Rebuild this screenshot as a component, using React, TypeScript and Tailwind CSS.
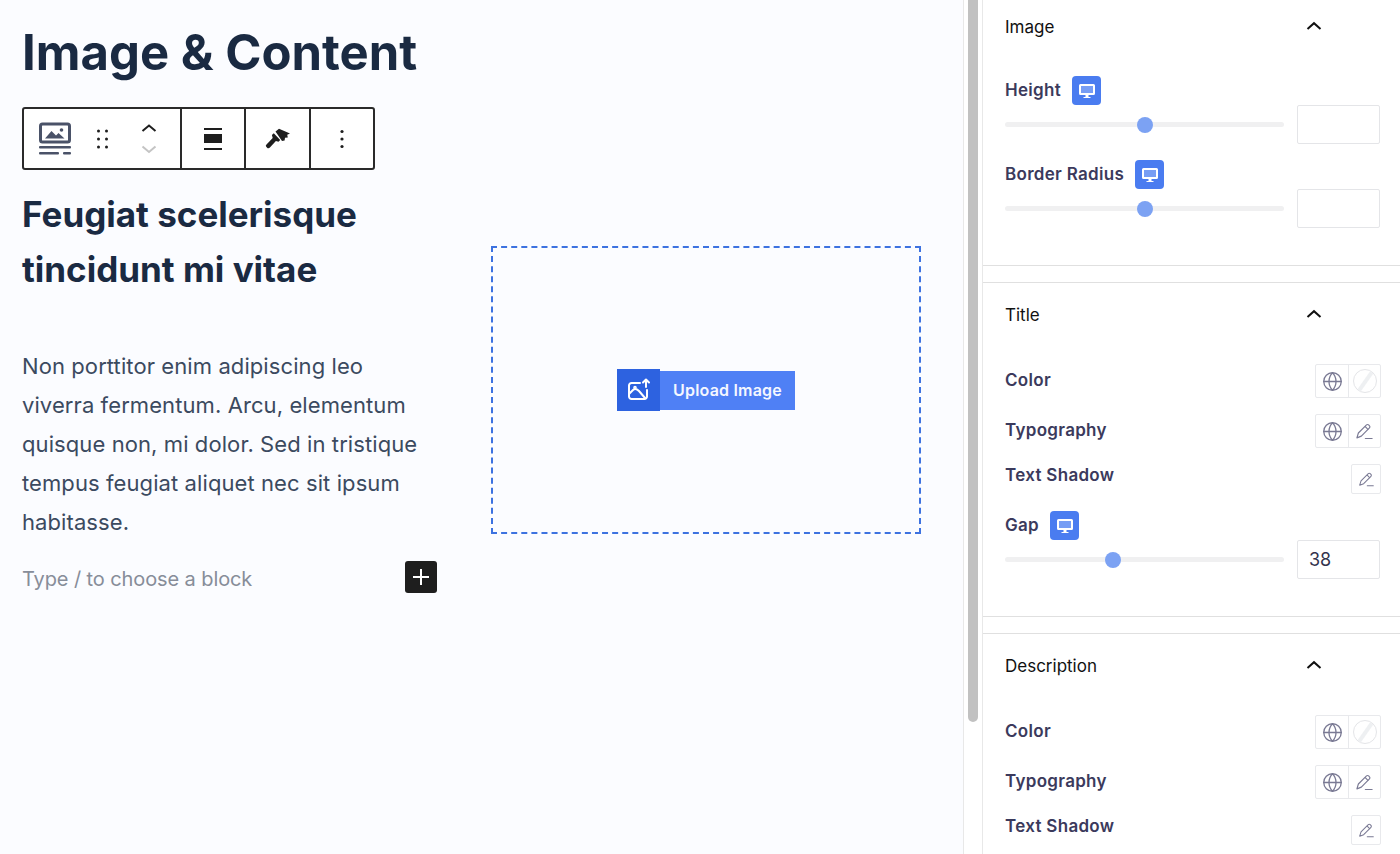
import { Globe } from 'lucide-react';

function Desktop() {
  return (
    <span className="flex h-[29px] w-[29px] items-center justify-center rounded-[4px] bg-[#4a7cf0]">
      <svg width="18" height="18" viewBox="0 0 18 18">
        <rect x="3" y="4" width="12" height="7" fill="#fff" opacity="0.25" />
        <path d="M2.500 2h13A1.500 1.500 0 0 1 17 3.500v8a1.500 1.500 0 0 1-1.500 1.500h-13A1.500 1.500 0 0 1 1 11.500v-8A1.500 1.500 0 0 1 2.500 2zM3 4v7h12V4z" fill="#fff" fillRule="evenodd" />
        <path d="M7.500 13h3v2h2v1h-7v-1h2z" fill="#fff" />
      </svg>
    </span>
  );
}

function Pencil({ size = 19 }: { size?: number }) {
  return (
    <svg width={size} height={size} viewBox="0 0 18 18" fill="none" stroke="#7a7a94" strokeWidth="1.100">
      <path d="M1.800 15 3.200 10.400 10.900 2.800a1.400 1.400 0 0 1 2 0l.8.8a1.400 1.400 0 0 1 0 2L6 13.400z" strokeLinejoin="round" />
      <path d="M9.500 4.200l3 3" />
      <path d="M9.800 15.600h6.400" strokeLinecap="round" />
    </svg>
  );
}

function NoColor() {
  return (
    <span className="relative block h-[24px] w-[24px] overflow-hidden rounded-full border border-[#e4e5e8] bg-white">
      <span className="absolute left-[9px] top-[-3px] h-[30px] w-[4px] rotate-[35deg] bg-[#eef0f2] blur-[0.5px]" />
    </span>
  );
}

function Chevron() {
  return (
    <svg width="16" height="10" viewBox="0 0 16 10" fill="none" stroke="#111" strokeWidth="2">
      <path d="M1.500 8 8 2.200 14.500 8" />
    </svg>
  );
}

function Slider({ label, value, thumb, className }: { label: string; value?: string; thumb: number; className?: string }) {
  return (
    <div className={className}>
      <div className="flex h-[29px] items-center gap-[11px]">
        <span className="text-[17px] font-semibold tracking-[0.3px] text-[#3b3a5c]">{label}</span>
        <Desktop />
      </div>
      <div className="flex h-[39px] items-center">
        <div className="relative h-[5px] w-[279px] rounded-full bg-[#f0f0f1]">
          <span className="absolute top-[-5.500px] h-4 w-4 rounded-full bg-[#7ca2f3]" style={{ left: thumb }} />
        </div>
        <div className="ml-[13px] flex h-[39px] w-[83px] items-center rounded-[2px] border border-[#e4e5e8] bg-white pl-[11px] text-[18px] text-[#33334d]">
          {value}
        </div>
      </div>
    </div>
  );
}

function ButtonRow({ label, kind }: { label: string; kind: 'color' | 'type' }) {
  return (
    <div className="flex h-[34px] items-center justify-between">
      <span className="text-[17px] font-semibold tracking-[0.3px] text-[#3b3a5c]">{label}</span>
      <div className="flex h-[34px] w-[66px] rounded-[2px] border border-[#e8e9ec] bg-white">
        <span className="flex w-[33px] items-center justify-center border-r border-[#e8e9ec]">
          <Globe size={21} color="#7a7a94" strokeWidth={1.500} />
        </span>
        <span className="flex flex-1 items-center justify-center">
          {kind === 'color' ? <NoColor /> : <Pencil />}
        </span>
      </div>
    </div>
  );
}

function ShadowRow() {
  return (
    <div className="flex h-[30px] items-center justify-between">
      <span className="mb-[6px] text-[17px] font-semibold tracking-[0.3px] text-[#3b3a5c]">Text Shadow</span>
      <span className="flex h-[30px] w-[30px] items-center justify-center rounded-[2px] border border-[#e8e9ec] bg-white">
        <Pencil size={17} />
      </span>
    </div>
  );
}

function Header({ title, first }: { title: string; first?: boolean }) {
  return (
    <div className={`flex items-center justify-between pr-[59px] ${first ? 'h-[56px]' : 'h-[66px]'}`}>
      <span className="text-[17px] text-[#111]">{title}</span>
      <span className="mb-[5px]">
        <Chevron />
      </span>
    </div>
  );
}

function Toolbar() {
  return (
    <div className="flex h-[63px] w-[353px] rounded-[3px] border-2 border-[#2a2a2a] bg-white">
      <div className="flex w-[158px] items-center border-r-2 border-[#2a2a2a]">
        <svg className="ml-[14px]" width="34" height="34" viewBox="0 0 34 34">
          <rect x="2.500" y="2" width="29" height="18" rx="2" fill="none" stroke="#4a5268" strokeWidth="3" />
          <path d="M7 16.500 13.500 9l4.500 4.500 2.500-2.500 6 5.500z" fill="#4a5268" />
          <circle cx="23.500" cy="8" r="1.800" fill="#4a5268" />
          <rect x="1" y="24" width="32" height="2.500" rx="1" fill="#4a5268" />
          <rect x="1" y="30" width="20" height="2.500" rx="1" fill="#4a5268" />
          <rect x="25" y="30" width="8" height="2.500" rx="1" fill="#4a5268" />
        </svg>
        <svg className="ml-[24px]" width="14" height="20" viewBox="0 0 14 20" fill="#1e1e1e">
          <circle cx="2.500" cy="2" r="1.500" />
          <circle cx="10.500" cy="2" r="1.500" />
          <circle cx="2.500" cy="10" r="1.500" />
          <circle cx="10.500" cy="10" r="1.500" />
          <circle cx="2.500" cy="18" r="1.500" />
          <circle cx="10.500" cy="18" r="1.500" />
        </svg>
        <svg className="ml-[31px] mt-[2px]" width="16" height="34" viewBox="0 0 16 34" fill="none" strokeWidth="2">
          <path d="M1.500 8 8 2.500 14.500 8" stroke="#1e1e1e" />
          <path d="M1.500 23.500 8 29 14.500 23.500" stroke="#c4c4c4" />
        </svg>
      </div>
      <div className="flex w-[64px] items-center justify-center border-r-2 border-[#2a2a2a]">
        <svg width="20" height="22" viewBox="0 0 20 22" fill="#1e1e1e">
          <rect x="1" y="0" width="18" height="2" />
          <rect x="1" y="6" width="18" height="9" />
          <rect x="1" y="20" width="18" height="2" />
        </svg>
      </div>
      <div className="flex w-[65px] items-center justify-center border-r-2 border-[#2a2a2a]">
        <svg width="26" height="22" viewBox="0 0 26 22" fill="#1e1e1e">
          <path d="M10.500 3.500 14 .8l11 4.700-2.800 1.300.6 2.800-2.800.2-.4 2.800-2.600.3z" />
          <path d="M8.800 5.200 15.200 12l-1.700 1.700-2.600-.8-6 6.600a2 2 0 0 1-3-.1 2 2 0 0 1-.4-3l6.200-6.300-.8-3.200z" />
        </svg>
      </div>
      <div className="flex flex-1 items-center justify-center">
        <svg width="4" height="20" viewBox="0 0 4 20" fill="#1e1e1e">
          <circle cx="2" cy="2.500" r="1.600" />
          <circle cx="2" cy="10" r="1.600" />
          <circle cx="2" cy="17.500" r="1.600" />
        </svg>
      </div>
    </div>
  );
}

export default function App() {
  return (
    <div className="flex h-[854px] w-[1400px] overflow-hidden bg-white font-['Inter',sans-serif]">
      {/* Canvas */}
      <div className="h-full w-[963px] shrink-0 bg-[#fbfcff] pl-[22px] pr-[42px]">
        <h1 className="mt-[24px] text-[49px] font-bold leading-[58px] text-[#1a2a42]">Image &amp; Content</h1>
        <div className="mt-[25px]">
          <Toolbar />
        </div>
        <div className="flex justify-between">
          <div className="w-[415px]">
            <h2 className="mt-[17px] text-[35px] font-bold leading-[55px] text-[#1a2a42]">
              Feugiat scelerisque tincidunt mi vitae
            </h2>
            <p className="mt-[50px] text-[22px] leading-[39px] tracking-[0.09px] text-[#3b4a60]">
              Non porttitor enim adipiscing leo viverra fermentum. Arcu, elementum quisque non, mi dolor. Sed in tristique tempus feugiat aliquet nec sit ipsum habitasse.
            </p>
            <div className="mt-[19px] flex h-[32px] items-center justify-between">
              <span className="pt-[3px] text-[20px] tracking-[-0.1px] text-[#878d99]">Type / to choose a block</span>
              <span className="flex h-[32px] w-[32px] items-center justify-center rounded-[3px] bg-[#1e1e1e]">
                <svg width="18" height="18" viewBox="0 0 18 18" stroke="#fff" strokeWidth="2">
                  <path d="M9 1v16M1 9h16" />
                </svg>
              </span>
            </div>
          </div>
          <div className="mt-[76px] flex h-[288px] w-[430px] items-center justify-center border-2 border-dashed border-[#3d72e0]">
            <div className="flex items-center">
              <span className="flex h-[42px] w-[43px] items-center justify-center bg-[#2d62e0]">
                <svg width="24" height="24" viewBox="0 0 24 24" fill="none" stroke="#fff" strokeWidth="2" strokeLinecap="round" strokeLinejoin="round">
                  <path d="M13 5H4.500A2.500 2.500 0 0 0 2 7.500v11A2.500 2.500 0 0 0 4.500 21h13a2.500 2.500 0 0 0 2.500-2.500V12" />
                  <path d="M2 16l4-4c2-2 4-1 6 1l6 7" />
                  <circle cx="8" cy="9.500" r="0.800" />
                  <path d="M19 9V2M16 4.500 19 1.500l3 3" />
                </svg>
              </span>
              <span className="flex h-[39px] w-[135px] items-center justify-center bg-[#4f80f5] text-[16px] font-semibold tracking-[0.2px] text-[#f4f7ff]">
                Upload Image
              </span>
            </div>
          </div>
        </div>
      </div>

      {/* Scrollbar */}
      <div className="h-full w-[20px] shrink-0 border-x border-[#e8e8e8] bg-white pl-[4px]">
        <div className="h-[722px] w-[10px] rounded-b-full bg-[#c1c1c1]" />
      </div>

      {/* Sidebar */}
      <div className="min-w-0 flex-1 bg-white">
        <section className="h-[266px] border-b border-[#e0e0e0] pl-[22px] pr-[19px]">
          <Header title="Image" first />
          <div className="mt-[20px] flex flex-col gap-[16px]">
            <Slider label="Height" thumb={132} />
            <Slider label="Border Radius" thumb={132} />
          </div>
        </section>
        <section className="mt-[16px] h-[335px] border-y border-[#e0e0e0] pl-[22px] pr-[19px]">
          <Header title="Title" />
          <div className="mt-[15px] flex flex-col gap-[16px]">
            <ButtonRow label="Color" kind="color" />
            <ButtonRow label="Typography" kind="type" />
            <ShadowRow />
            <Slider label="Gap" value="38" thumb={100} className="mt-px" />
          </div>
        </section>
        <section className="mt-[16px] border-t border-[#e0e0e0] pl-[22px] pr-[19px]">
          <Header title="Description" />
          <div className="mt-[15px] flex flex-col gap-[16px]">
            <ButtonRow label="Color" kind="color" />
            <ButtonRow label="Typography" kind="type" />
            <ShadowRow />
          </div>
        </section>
      </div>
    </div>
  );
}
